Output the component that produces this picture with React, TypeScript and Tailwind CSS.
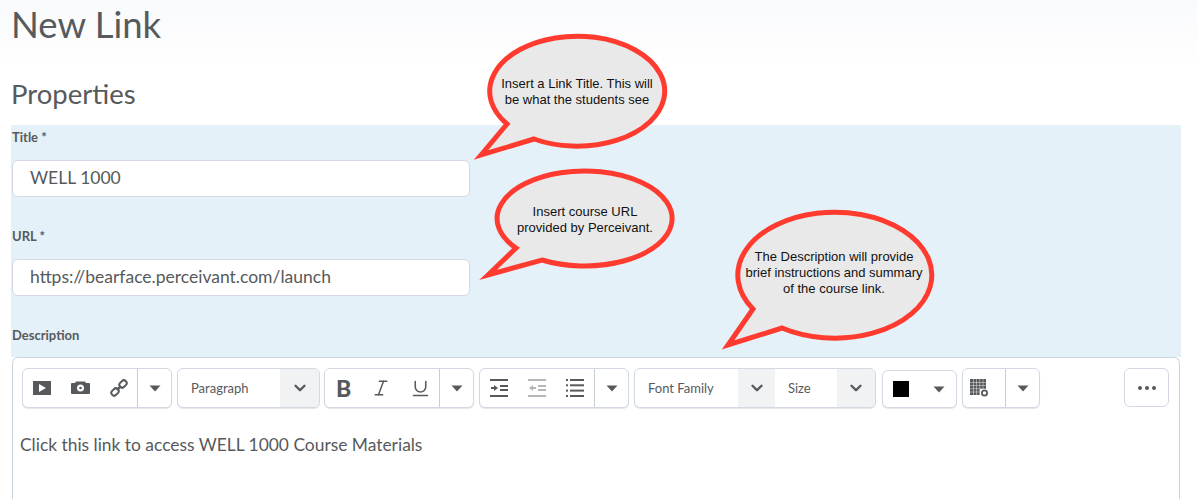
import { ChevronDown, Italic, Underline } from "lucide-react";
import type { ReactNode } from "react";

const ink = "#565a5c";

function Caret() {
  return (
    <svg width="12" height="7" viewBox="0 0 12 7">
      <path d="M0.5 0.5h11L6 6.5z" fill={ink} />
    </svg>
  );
}

function Chevron() {
  return <ChevronDown size={18} strokeWidth={3.2} color={ink} />;
}

function Group({ className, children }: { className: string; children: ReactNode }) {
  return (
    <div className={`flex shrink-0 items-center overflow-hidden rounded-md border border-[#d3d9e3] bg-white shadow-[0_1px_1px_rgba(0,0,0,0.1)] ${className}`}>
      {children}
    </div>
  );
}

function CaretCell() {
  return (
    <div className="flex h-full w-[34px] items-center justify-center border-l border-[#c9cdd1]">
      <Caret />
    </div>
  );
}

function ChevronCell({ className }: { className: string }) {
  return <div className={`flex h-full items-center justify-center bg-[#f1f2f4] ${className}`}><Chevron /></div>;
}

function IndentIcon({ out, color }: { out?: boolean; color: string }) {
  return (
    <svg width="18" height="18" viewBox="0 0 18 18" fill={color}>
      <rect x="0" y="0" width="18" height="2" />
      <rect x="10" y="6" width="8" height="2" />
      <rect x="10" y="10" width="8" height="2" />
      <rect x="0" y="16" width="18" height="2" />
      {out ? <path d="M1 9l4-3v2h3v2H5v2z" /> : <path d="M8 9L4 6v2H1v2h3v2z" />}
    </svg>
  );
}

function ListIcon() {
  return (
    <svg width="18" height="18" viewBox="0 0 18 18" fill={ink}>
      {[0, 5.3, 10.6, 16].map((y) => (
        <g key={y}>
          <rect x="4" y={y} width="14" height="2" />
          <rect x="0" y={y} width="2" height="2" />
        </g>
      ))}
    </svg>
  );
}

function TableIcon() {
  return (
    <svg width="19" height="18" viewBox="0 0 19 18">
      <rect x="0" y="0" width="16" height="16" fill={ink} />
      {[3, 6.2, 9.4, 12.6].map((p) => (
        <g key={p} fill="#fff" opacity="0.55">
          <rect x={p} y="0" width="0.8" height="16" />
          <rect x="0" y={p} width="16" height="0.8" />
        </g>
      ))}
      <rect x="10" y="10" width="9" height="8" fill="#fff" />
      <circle cx="14.5" cy="14" r="2.6" fill="none" stroke={ink} strokeWidth="1.8" />
    </svg>
  );
}

function Bubble({ box, d, textClass, children }: { box: string; d: string; textClass: string; children: ReactNode }) {
  return (
    <div className={`absolute ${box}`}>
      <svg className="absolute inset-0 h-full w-full" fill="none">
        <path d={d} fill="#e9e9e9" stroke="#ff3b30" strokeWidth="5" strokeLinejoin="miter" strokeMiterlimit="8" />
      </svg>
      <div className={`absolute text-center font-['Liberation_Sans',sans-serif] text-[13px] leading-[16px] text-[#111] ${textClass}`}>
        {children}
      </div>
    </div>
  );
}

export default function App() {
  return (
    <div className="relative h-[499px] w-[1197px] overflow-hidden bg-gradient-to-b from-[#f9fafc] to-white to-[70px] font-['Lato',sans-serif] text-[#565a5c]">
      <h1 className="pl-[11px] pt-[2px] text-[36.5px] leading-[44px]">New Link</h1>
      <h2 className="pl-[11px] pt-[32px] text-[27.5px] leading-[32px]">Properties</h2>

      <div className="ml-[11px] mt-[15px] h-[232px] w-[1170px] bg-[#e5f1f9] pl-px pt-[4px]">
        <div className="text-[13px] font-bold leading-[16px]">Title *</div>
        <div className="mt-[15px] flex h-[37px] w-[458px] items-center rounded-md border border-[#d3d9e3] bg-white pl-[17px] text-[17.5px]">WELL 1000</div>
        <div className="mt-[31px] text-[13px] font-bold leading-[16px]">URL *</div>
        <div className="mt-[15px] flex h-[37px] w-[458px] items-center rounded-md border border-[#d3d9e3] bg-white pl-[17px] text-[17.5px]">https://bearface.perceivant.com/launch</div>
        <div className="mt-[31px] text-[13px] font-bold leading-[16px]">Description</div>
      </div>

      <div className="ml-[12px] h-[150px] w-[1168px] rounded-t-md border border-b-0 border-[#cdd5dc] bg-white pl-[9px] pt-[10px]">
        <div className="flex items-start">
          <Group className="h-10 w-[150px]">
            <div className="flex flex-1 items-center justify-between pl-[10px] pr-[9px]">
              <svg width="18" height="14" viewBox="0 0 18 14"><path fillRule="evenodd" d="M0 0h18v14H0zM6 3v8l7-4z" fill={ink} /></svg>
              <svg width="19" height="14" viewBox="0 0 19 14"><path fillRule="evenodd" d="M5 0.5h9l1 1.5h3a1 1 0 0 1 1 1v9a1 1 0 0 1-1 1H1a1 1 0 0 1-1-1V3a1 1 0 0 1 1-1h3zM9.5 3.5a3.5 3.5 0 1 0 0 7a3.5 3.5 0 0 0 0-7zM9.5 5.7a1.3 1.3 0 1 1 0 2.6a1.3 1.3 0 0 1 0-2.6z" fill={ink} /></svg>
              <svg width="18" height="18" viewBox="0 0 18 18" fill="none" stroke={ink} strokeWidth="2">
                <rect x="9" y="2.2" width="8" height="5.6" rx="2.8" transform="rotate(-45 13 5)" />
                <rect x="1" y="10.2" width="8" height="5.6" rx="2.8" transform="rotate(-45 5 13)" />
                <path d="M7 11l4-4" strokeWidth="2.4" />
              </svg>
            </div>
            <CaretCell />
          </Group>
          <Group className="ml-[5px] h-10 w-[143px]">
            <div className="flex-1 pl-[13px] pt-px text-[13px]">Paragraph</div>
            <ChevronCell className="w-[39px]" />
          </Group>
          <Group className="ml-[4px] h-10 w-[150px]">
            <div className="flex flex-1 items-center justify-between pl-[11px] pr-[8px]">
              <span className="text-[23px] font-black leading-none">B</span>
              <Italic size={20} strokeWidth={1.8} color={ink} />
              <Underline size={21} strokeWidth={1.8} color={ink} />
            </div>
            <CaretCell />
          </Group>
          <Group className="ml-[5px] h-10 w-[150px]">
            <div className="flex flex-1 items-center justify-between pl-[10px] pr-[10px]">
              <IndentIcon color={ink} />
              <IndentIcon out color="#b4b6b8" />
              <ListIcon />
            </div>
            <CaretCell />
          </Group>
          <Group className="ml-[5px] h-10 w-[242px]">
            <div className="w-[103px] pl-[13px] pt-px text-[13px]">Font Family</div>
            <ChevronCell className="w-[37px]" />
            <div className="flex-1 pl-[13px] pt-px text-[13px]">Size</div>
            <ChevronCell className="w-[38px]" />
          </Group>
          <Group className="ml-[6px] mt-[2px] h-[38px] w-[75px]">
            <div className="ml-[10px] size-[16px] bg-black" />
            <div className="ml-[24px]"><Caret /></div>
          </Group>
          <Group className="ml-[5px] h-10 w-[78px]">
            <div className="flex h-full w-[43px] items-center pl-[7px]"><TableIcon /></div>
            <CaretCell />
          </Group>
          <div className="ml-[84px] flex h-[39px] w-[45px] shrink-0 items-center justify-center gap-[3px] rounded-md border border-[#d3d9e3] bg-white">
            <span className="size-[4px] rounded-full bg-[#565a5c]" />
            <span className="size-[4px] rounded-full bg-[#565a5c]" />
            <span className="size-[4px] rounded-full bg-[#565a5c]" />
          </div>
        </div>
        <p className="-ml-[2px] mt-[25px] text-[17.4px] leading-[24px]">Click this link to access WELL 1000 Course Materials</p>
      </div>

      <Bubble box="left-[472px] top-[32px] h-[135px] w-[205px]" d="M9 123 L35 92 A87.5 55 0 1 1 62 107 Z" textClass="left-[25px] top-[44px] w-[160px]">
        Insert a Link Title. This will<br />be what the students see
      </Bubble>
      <Bubble box="left-[479px] top-[168px] h-[118px] w-[205px]" d="M9 107 L37 80 A87.5 47.5 0 1 1 63 92 Z" textClass="left-[16px] top-[36px] w-[180px]">
        Insert course URL<br />provided by Perceivant.
      </Bubble>
      <Bubble box="left-[716px] top-[208px] h-[150px] w-[225px]" d="M12 137 L37 101 A97 63 0 1 1 66 120 Z" textClass="left-[13px] top-[41px] w-[210px]">
        The Description will provide<br />brief instructions and summary<br />of the course link.
      </Bubble>
    </div>
  );
}
